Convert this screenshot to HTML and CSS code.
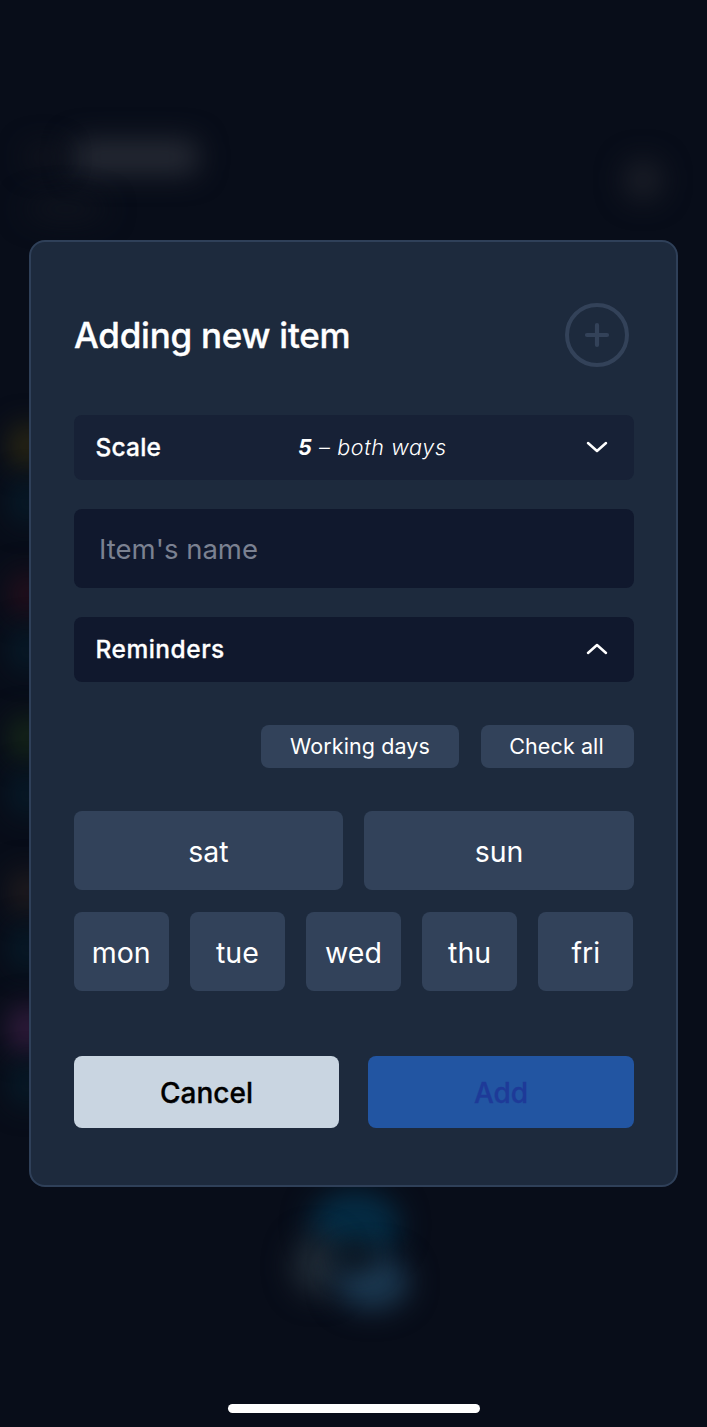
FILE: index.html
```html
<!DOCTYPE html>
<html lang="en">
<head>
<meta charset="utf-8">
<title>Adding new item</title>
<link rel="stylesheet" href="styles.css">
</head>
<body>
<div class="backdrop" aria-hidden="true">
  <i class="blob b-title"></i><i class="blob b-title2"></i><i class="blob b-sub"></i><i class="blob b-avatar"></i>
  <i class="blob b-y"></i><i class="blob b-c1"></i><i class="blob b-r"></i><i class="blob b-c2"></i>
  <i class="blob b-g"></i><i class="blob b-c3"></i><i class="blob b-o"></i><i class="blob b-c4"></i>
  <i class="blob b-p"></i><i class="blob b-c5"></i>
  <i class="blob b-fab1"></i><i class="blob b-fab2"></i><i class="blob b-fab3"></i><i class="blob b-fab4"></i>
</div>
<main class="modal">
  <header class="head">
    <h1 class="title">Adding new item</h1>
    <svg class="plus" viewBox="0 0 64 64" width="64" height="64" fill="none" stroke="#334259" stroke-linecap="round">
      <circle cx="32" cy="32" r="30" stroke-width="4"/>
      <path d="M32 22v20M22 32h20" stroke-width="4.200"/>
    </svg>
  </header>
  <div class="select scale">
    <span class="label">Scale</span>
    <span class="value"><b>5</b> – both ways</span>
    <svg class="chev" viewBox="0 0 24 14" width="24" height="14" fill="none" stroke="#fff" stroke-width="2.500" stroke-linecap="round" stroke-linejoin="round"><path d="M3 3l9 8 9-8"/></svg>
  </div>
  <div class="input">Item's name</div>
  <div class="select reminders">
    <span class="label">Reminders</span>
    <svg class="chev" viewBox="0 0 24 14" width="24" height="14" fill="none" stroke="#fff" stroke-width="2.500" stroke-linecap="round" stroke-linejoin="round"><path d="M3 11l9-8 9 8"/></svg>
  </div>
  <div class="chips">
    <span class="chip wd">Working days</span>
    <span class="chip ca">Check all</span>
  </div>
  <div class="days weekend">
    <span class="day">sat</span><span class="day">sun</span>
  </div>
  <div class="days weekdays">
    <span class="day">mon</span><span class="day">tue</span><span class="day">wed</span><span class="day">thu</span><span class="day">fri</span>
  </div>
  <div class="actions">
    <span class="btn cancel">Cancel</span>
    <span class="btn add">Add</span>
  </div>
</main>
<div class="home"></div>
</body>
</html>
```
FILE: styles.css
```css
* { box-sizing: border-box; }
html, body { margin: 0; height: 100%; }
body {
  position: relative;
  width: 707px;
  height: 1427px;
  overflow: hidden;
  background: #080d19;
  font-family: Inter, "Liberation Sans", sans-serif;
  color: #fff;
  padding-top: 240px;
}
.backdrop { position: absolute; inset: 0; overflow: hidden; }
.blob { position: absolute; display: block; filter: blur(14px); border-radius: 50%; }
.b-title { left: 72px; top: 140px; width: 126px; height: 34px; background: #262a34; border-radius: 10px; }
.b-title2 { left: 26px; top: 146px; width: 36px; height: 22px; background: #14161f; }
.b-sub { left: 24px; top: 198px; width: 84px; height: 22px; background: #10141e; }
.b-avatar { left: 624px; top: 160px; width: 38px; height: 40px; background: #1c1f28; }
.b-y { left: 10px; top: 424px; width: 34px; height: 44px; background: #2e2a12; }
.b-c1 { left: 10px; top: 480px; width: 34px; height: 44px; background: #061c2a; }
.b-r { left: 10px; top: 572px; width: 34px; height: 44px; background: #280f1c; }
.b-c2 { left: 10px; top: 628px; width: 34px; height: 44px; background: #061c2a; }
.b-g { left: 10px; top: 716px; width: 34px; height: 44px; background: #172a18; }
.b-c3 { left: 10px; top: 772px; width: 34px; height: 44px; background: #061c2a; }
.b-o { left: 10px; top: 870px; width: 34px; height: 44px; background: #231d1e; }
.b-c4 { left: 10px; top: 926px; width: 34px; height: 44px; background: #061c2a; }
.b-p { left: 8px; top: 1004px; width: 38px; height: 50px; background: #331c3e; }
.b-c5 { left: 10px; top: 1062px; width: 34px; height: 44px; background: #061c2a; }
.b-fab1 { left: 310px; top: 1190px; width: 90px; height: 70px; background: #052c44; }
.b-fab2 { left: 292px; top: 1236px; width: 50px; height: 60px; background: #1f2a35; }
.b-fab3 { left: 335px; top: 1254px; width: 74px; height: 56px; background: #1b3850; }
.b-fab4 { left: 338px; top: 1240px; width: 36px; height: 30px; background: #0a1019; }

.modal {
  position: relative;
  width: 649px;
  height: 947px;
  margin-left: 29px;
  padding: 60.500px 42px 0 43px;
  background: #1d2a3d;
  border: 2px solid #2f4059;
  border-radius: 16px;
}
.head { display: flex; align-items: center; justify-content: space-between; height: 64px; padding-right: 5px; margin-bottom: 48px; }
.title { margin: 0; padding-top: 1px; font-size: 35px; font-weight: 500; letter-spacing: -0.25px; -webkit-text-stroke: 0.35px #fff; }
.select { display: flex; align-items: center; height: 65px; padding: 0 25px 0 21.500px; border-radius: 8px; }
.scale { background: #172136; position: relative; margin-bottom: 29px; }
.reminders { background: #10182d; justify-content: space-between; margin-bottom: 43.500px; }
.label { font-size: 24.500px; font-weight: 500; letter-spacing: 0.2px; -webkit-text-stroke: 0.3px #fff; }
.reminders .label { letter-spacing: 0.5px; }
.value { position: absolute; left: 224px; font-size: 21.500px; font-style: italic; font-weight: 300; letter-spacing: 0.65px; }
.value b { font-weight: 700; }
.scale .chev { margin-left: auto; }
.input { height: 79px; margin-bottom: 29px; padding: 1px 0 0 25px; display: flex; align-items: center; background: #10182d; border-radius: 8px; color: #7b8191; font-size: 27.500px; font-weight: 400; }
.chips { display: flex; justify-content: flex-end; gap: 22px; margin-bottom: 43px; }
.chip { display: flex; align-items: center; justify-content: center; height: 43px; padding-bottom: 1px; background: #32425a; border-radius: 8px; font-size: 21.500px; letter-spacing: 0.1px; }
.wd { width: 198px; }
.ca { width: 153px; padding-right: 2px; }
.days { display: grid; }
.weekend { grid-template-columns: 269px 270px; gap: 21px; margin-bottom: 22px; }
.weekdays { grid-template-columns: repeat(5, 1fr); gap: 21.600px; padding-right: 1px; margin-bottom: 65px; }
.day { display: flex; align-items: center; justify-content: center; height: 79px; padding-top: 2px; background: #32425a; border-radius: 8px; font-size: 28.500px; font-weight: 400; }
.actions { display: grid; grid-template-columns: 265px 266px; gap: 29px; }
.btn { display: flex; align-items: center; justify-content: center; height: 72px; padding-top: 1px; border-radius: 8px; font-size: 28px; font-weight: 500; -webkit-text-stroke: 0.3px currentColor; }
.cancel { background: #c9d5e1; color: #000; }
.add { background: #2255a2; color: #1e3a98; }
.home { position: absolute; left: 228px; top: 1404px; width: 252px; height: 9px; background: #fff; border-radius: 5px; }
```
